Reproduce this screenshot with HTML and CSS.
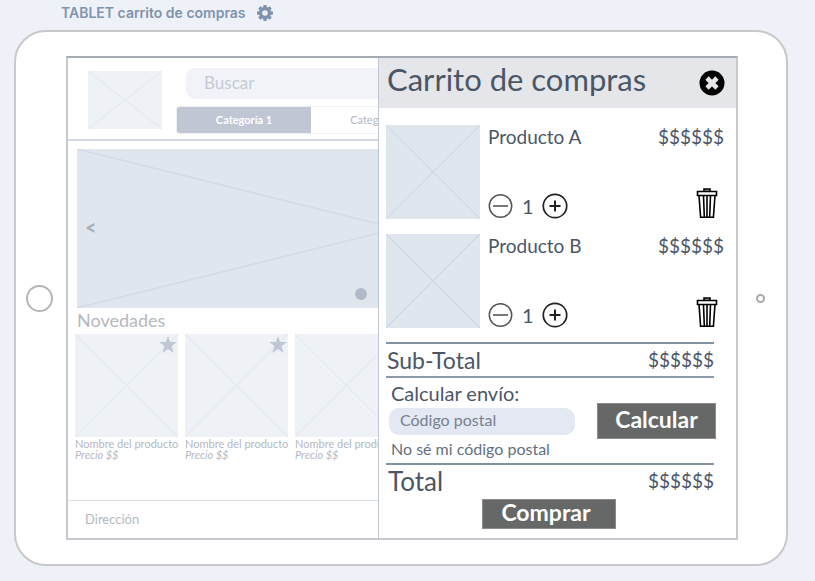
FILE: index.html
```html
<!DOCTYPE html>
<html lang="es">
<head>
<meta charset="utf-8">
<title>TABLET carrito de compras</title>
<link rel="stylesheet" href="styles.css">
</head>
<body>
<svg width="0" height="0" class="sprite" aria-hidden="true">
  <symbol id="cross" viewBox="0 0 100 100" preserveAspectRatio="none">
    <path d="M0 0L100 100M0 100L100 0" fill="none" stroke="currentColor" stroke-width="1.300" vector-effect="non-scaling-stroke"/>
  </symbol>
  <symbol id="star" viewBox="0 0 18 17">
    <path d="M9 0l2.200 6.100H18l-5.400 4L14.600 17 9 12.900 3.400 17l2-6.900L0 6.100h6.800z" fill="currentColor"/>
  </symbol>
  <symbol id="minus" viewBox="0 0 26 26">
    <circle cx="12.500" cy="13" r="11.200" fill="none" stroke="#555" stroke-width="1.500"/>
    <path d="M5 13h15" stroke="#777" stroke-width="2"/>
  </symbol>
  <symbol id="plus" viewBox="0 0 26 26">
    <circle cx="13" cy="13" r="11.700" fill="none" stroke="#222" stroke-width="1.700"/>
    <path d="M7.500 13h11M13 7.500v11" stroke="#222" stroke-width="2"/>
  </symbol>
  <symbol id="trash" viewBox="0 0 22 32">
    <g fill="none" stroke="#000" stroke-width="1.600">
      <path d="M8 4.500V2h6v2.500" fill="#999"/>
      <path d="M1.500 4.500h19v4h-19z"/>
      <path d="M3 8.500l1.600 21.700h12.800L19 8.500M7.500 8.500l.8 21.500M11 8.500v21.500M14.500 8.500l-.8 21.500"/>
    </g>
  </symbol>
</svg>
<header class="caption">
  <h1>TABLET carrito de compras</h1>
  <svg class="gear" viewBox="0 0 16 16" aria-hidden="true">
    <g fill="#8093ad">
      <path id="teeth" d="M6.500 0h3l.5 3H6zM6.500 16h3l.5-3H6zM0 6.500v3l3 .5V6zM16 6.500v3l-3 .5V6z"/>
      <use href="#teeth" transform="rotate(45 8 8)"/>
    </g>
    <circle cx="8" cy="8" r="4.400" fill="none" stroke="#8093ad" stroke-width="3.200"/>
  </svg>
</header>
<main class="tablet">
  <span class="home"></span>
  <div class="screen">
    <section class="store">
      <div class="store-head">
        <svg class="logo"><use href="#cross"/></svg>
        <div class="store-nav">
          <input class="search" type="search" placeholder="Buscar" aria-label="Buscar">
          <nav class="tabs">
            <a href="#" class="tab active">Categoría 1</a>
            <a href="#" class="tab">Categoría 2</a>
          </nav>
        </div>
      </div>
      <div class="banner">
        <svg class="banner-lines"><use href="#cross"/></svg>
        <button class="prev" aria-label="Anterior">&lt;</button>
        <span class="dot"></span>
      </div>
      <h2 class="news">Novedades</h2>
      <div class="cards">
        <article class="card">
          <svg class="photo"><use href="#cross"/></svg>
          <svg class="star"><use href="#star"/></svg>
          <p>Nombre del producto</p><p class="cost">Precio $$</p>
        </article>
        <article class="card">
          <svg class="photo"><use href="#cross"/></svg>
          <svg class="star"><use href="#star"/></svg>
          <p>Nombre del producto</p><p class="cost">Precio $$</p>
        </article>
        <article class="card">
          <svg class="photo"><use href="#cross"/></svg>
          <p>Nombre del producto</p><p class="cost">Precio $$</p>
        </article>
      </div>
      <footer class="address">Dirección</footer>
    </section>
    <aside class="cart">
      <div class="cart-head">
        <h2>Carrito de compras</h2>
        <button class="icon" aria-label="Cerrar">
          <svg width="26" height="26" viewBox="0 0 26 26"><circle cx="13" cy="13" r="12.500"/><path d="M8 8l10 10M18 8L8 18" stroke="#e5e6ea" stroke-width="4.600"/></svg>
        </button>
      </div>
      <ul class="items">
        <li class="item">
          <svg class="thumb"><use href="#cross"/></svg>
          <div class="details">
            <div class="row"><h3>Producto A</h3><span class="price">$$$$$$</span></div>
            <div class="row">
              <div class="qty">
                <button class="icon" aria-label="Restar"><svg width="26" height="26"><use href="#minus"/></svg></button>
                <span>1</span>
                <button class="icon" aria-label="Sumar"><svg width="26" height="26"><use href="#plus"/></svg></button>
              </div>
              <button class="icon trash" aria-label="Eliminar"><svg width="22" height="32"><use href="#trash"/></svg></button>
            </div>
          </div>
        </li>
        <li class="item">
          <svg class="thumb"><use href="#cross"/></svg>
          <div class="details">
            <div class="row"><h3>Producto B</h3><span class="price">$$$$$$</span></div>
            <div class="row">
              <div class="qty">
                <button class="icon" aria-label="Restar"><svg width="26" height="26"><use href="#minus"/></svg></button>
                <span>1</span>
                <button class="icon" aria-label="Sumar"><svg width="26" height="26"><use href="#plus"/></svg></button>
              </div>
              <button class="icon trash" aria-label="Eliminar"><svg width="22" height="32"><use href="#trash"/></svg></button>
            </div>
          </div>
        </li>
      </ul>
      <div class="summary">
        <div class="subtotal"><span>Sub-Total</span><span class="price">$$$$$$</span></div>
        <form class="shipping">
          <div class="postal">
            <label for="cp">Calcular envío:</label>
            <input id="cp" type="text" placeholder="Código postal">
            <a href="#">No sé mi código postal</a>
          </div>
          <button type="button" class="action calc">Calcular</button>
        </form>
        <div class="total"><span>Total</span><span class="price">$$$$$$</span></div>
        <button type="button" class="action buy">Comprar</button>
      </div>
    </aside>
  </div>
  <span class="camera"></span>
</main>
</body>
</html>
```
FILE: styles.css
```css
* { box-sizing: border-box; }
body {
  margin: 0;
  padding: 0 27px 14px 14px;
  background: #eef1f7;
  font-family: Lato, "Liberation Sans", sans-serif;
  color: #4b5666;
}
h1, h2, h3, p, ul { margin: 0; padding: 0; font-weight: 400; }
a { color: inherit; text-decoration: none; }
button { font: inherit; color: inherit; border: 0; padding: 0; background: none; }
input { font: inherit; border: 0; margin: 0; }
svg { display: block; }
.sprite { position: absolute; }

.caption { display: flex; align-items: center; gap: 11px; height: 30px; padding: 0 0 4px 47px; }
.caption h1 { font: 600 14px/20px Inter, sans-serif; color: #8093ad; }
.gear { width: 16px; height: 16px; }

.tablet {
  display: grid;
  grid-template-columns: 50px 1fr 48px;
  align-items: center;
  padding: 24px 0;
  background: #fff;
  border: 2px solid #c8c8c8;
  border-radius: 32px;
}
.home { justify-self: center; width: 27px; height: 27px; margin-right: 4px; border: 2px solid #b5b5b5; border-radius: 50%; }
.camera { justify-self: center; width: 9px; height: 9px; margin-right: 4px; border: 2px solid #aaa; border-radius: 50%; }

.screen { display: grid; border: 2px solid #c6c9ce; border-top-color: #a5abb3; }
.store, .cart { grid-area: 1 / 1; }

.store { display: flex; flex-direction: column; color: #b5b8bf; }
.store-head { display: flex; gap: 14px; height: 83px; padding: 10px 20px 0; border-bottom: 2px solid #d3d8e2; }
.logo { width: 74px; height: 58px; margin-top: 3px; background: #eef1f6; color: #e5e9f0; }
.store-nav { flex: 1; }
.search {
  display: block;
  width: calc(100% - 10px);
  height: 31px;
  margin-left: 10px;
  padding: 0 18px 2px;
  border-radius: 9px;
  background: #f2f3f8;
  font-size: 17px;
}
.search::placeholder { color: #c5cad6; opacity: 1; }
.tabs { display: flex; height: 28px; margin-top: 7px; border: 1px solid #eff0f3; border-radius: 3px; overflow: hidden; }
.tab { width: 134px; font-size: 11px; line-height: 26px; text-align: center; }
.tab.active { background: #c0c6d3; color: #fff; font-weight: 700; }

.banner {
  display: grid;
  height: 159px;
  margin: 8px 19px 0 9px;
  background: #dfe6ee;
}
.banner > * { grid-area: 1 / 1; }
.banner-lines { width: 100%; height: 100%; color: #d3dae6; }
.prev { justify-self: start; align-self: center; margin-left: 8px; padding-bottom: 4px; font-size: 20px; font-weight: 700; line-height: 20px; color: #a5adb9; }
.dot { align-self: end; width: 12px; height: 12px; margin: 0 0 8px 278px; border-radius: 50%; background: #b0bac8; }

.news { padding: 0 9px; font-size: 18px; line-height: 24px; }
.cards { display: flex; gap: 7px; margin: 2px 7px 0; }
.card { display: grid; grid-template-columns: 103px; font-size: 11px; line-height: 11px; }
.photo, .star { grid-area: 1 / 1; }
.photo { width: 103px; height: 103px; margin-bottom: 1px; background: #eef1f6; color: #e6eaf1; }
.star { justify-self: end; width: 18px; height: 17px; margin: 2px 1px 0 0; color: #c0c7d4; }
.card p { white-space: nowrap; }
.card .cost { font-style: italic; }
.address { margin-top: auto; padding: 0 17px; border-top: 1px solid #dcdfe3; font-size: 13px; line-height: 37px; }

.cart { justify-self: end; width: 358px; background: #fff; border-left: 1px solid #bfc7d4; }
.cart-head {
  display: flex;
  align-items: center;
  justify-content: space-between;
  height: 50px;
  padding: 0 11px 0 8px;
  background: #e5e6ea;
}
.cart-head h2 { font-size: 31px; line-height: 44px; padding-bottom: 8px; }
.icon svg { overflow: visible; }

.items { display: grid; gap: 15px; padding: 17px 12px 14px 7px; list-style: none; }
.item { display: flex; gap: 8px; }
.thumb { flex: none; width: 94px; height: 94px; background: #dfe6ee; color: #d0d9e5; }
.details { flex: 1; display: flex; flex-direction: column; justify-content: space-between; }
.row { display: flex; align-items: flex-end; justify-content: space-between; }
.row h3, .row .price { line-height: 24px; }
.row h3, .price { font-size: 19px; }
.qty { display: flex; align-items: center; gap: 8px; font-size: 20px; line-height: 26px; }
.trash { margin-right: 6px; }

.summary { padding: 0 22px 9px 7px; line-height: 32px; }
.subtotal, .total { display: flex; align-items: center; justify-content: space-between; border-top: 2px solid #8390a1; }
.subtotal { border-bottom: 2px solid #8e9aaa; padding-left: 1px; font-size: 23px; }
.total { padding-left: 2px; font-size: 26px; }
.shipping { display: flex; align-items: center; justify-content: space-between; margin-right: -2px; padding: 1px 0 1px 3px; }
.postal { display: grid; justify-items: start; }
.postal label { padding-left: 2px; font-size: 20px; line-height: 28px; }
.postal input { width: 186px; height: 27px; margin-top: 1px; padding: 0 11px 3px; border-radius: 10px; background: #e3e8f2; font-size: 16px; }
.postal input::placeholder { color: #76828f; opacity: 1; }
.postal a { padding-left: 2px; font-size: 16px; line-height: 27px; color: #64707f; }
.action { background: #666867; border: 1px solid #8b8c8c; color: #fff; font-weight: 700; font-size: 23px; }
.calc { width: 119px; height: 36px; padding-bottom: 3px; line-height: 30px; }
.buy { display: block; width: 134px; height: 30px; margin: 2px auto 0 96px; padding: 0 6px 4px 0; line-height: 24px; }
```
